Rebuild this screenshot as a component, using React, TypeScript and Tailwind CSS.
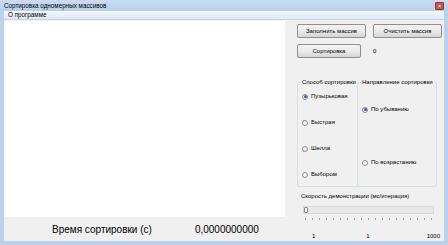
import { useState } from "react";

const font = { fontFamily: '"Liberation Sans", Arial, sans-serif' };

const Btn = ({ label, w }: { label: string; w: string }) => (
  <div
    className={`${w} h-[14px] flex items-center justify-center whitespace-nowrap text-[6px] text-black border border-[#8e8f8f] rounded-[2px] bg-gradient-to-b from-[#f2f2f2] via-[#ebebeb] to-[#d5d5d5]`}
  >
    {label}
  </div>
);

const Radio = ({ label, checked }: { label: string; checked?: boolean }) => (
  <div className="h-[7px] flex items-center gap-[3px] whitespace-nowrap text-[6px] text-black">
    <span className="w-[6px] h-[6px] rounded-full border border-[#8d8d8d] bg-[#f4f4f4] flex items-center justify-center">
      {checked && <span className="w-[3px] h-[3px] rounded-full bg-[#2a62b5]" />}
    </span>
    {label}
  </div>
);

export default function App() {
  const [method] = useState("bubble");
  return (
    <div style={font} className="w-[448px] h-[245px] bg-[#bcd2ec] flex flex-col overflow-hidden">
      {/* title bar */}
      <div className="h-[12px] flex items-center justify-between pl-[4px] pr-[4px] bg-gradient-to-b from-[#c9dcf2] to-[#b9cfea]">
        <span className="text-[6.3px] text-black whitespace-nowrap">Сортировка одномерных массивов</span>
        <span className="w-[9px] h-[8px] rounded-[1px] bg-[#c9544a] border border-[#8b3a33] flex items-center justify-center text-white text-[6px] leading-none">
          ×
        </span>
      </div>
      <div className="flex-1 flex flex-col px-[4px] pb-[4px]">
        {/* menu */}
        <div className="h-[9px] flex items-center pl-[4px] bg-gradient-to-b from-[#f4f8fd] to-[#dfe9f6] border-b border-[#c6d4e6]">
          <span className="text-[6.3px] text-black whitespace-nowrap">О программе</span>
        </div>
        {/* client */}
        <div className="flex-1 bg-[#f0f0f0] flex">
          <div className="w-[281px] flex flex-col">
            <div className="h-[196px] bg-white ml-[1px] mt-[1px]" />
            <div className="flex-1 flex items-center pl-[48px] text-[10px] text-black whitespace-nowrap">
              <span>Время сортировки (с)</span>
              <span className="ml-[43px]">0,0000000000</span>
            </div>
          </div>
          <div className="flex-1 flex flex-col pl-[12px] pr-[2px] pt-[4px]">
            <div className="flex gap-[7px]">
              <Btn label="Заполнить массив" w="w-[69px]" />
              <Btn label="Очистить массив" w="w-[69px]" />
            </div>
            <div className="flex items-center mt-[6px]">
              <Btn label="Сортировка" w="w-[64px]" />
              <span className="ml-[12px] text-[6px]">0</span>
            </div>
            {/* group boxes */}
            <div className="flex mt-[24px] h-[105px] mr-[5px]">
              <div className="relative w-[61px] border border-[#d5dfe5] rounded-[2px] flex flex-col pl-[4px] pt-[10px] gap-[19px]">
                <span className="absolute -top-[5px] left-[3px] bg-[#f0f0f0] px-[1px] text-[6px] whitespace-nowrap">Способ сортировки</span>
                <Radio label="Пузырьковая" checked={method === "bubble"} />
                <Radio label="Быстрая" />
                <Radio label="Шелла" />
                <Radio label="Выбором" />
              </div>
              <div className="relative flex-1 border border-[#d5dfe5] rounded-[2px] ml-[-1px] flex flex-col pl-[4px] pt-[23px] gap-[46px]">
                <span className="absolute -top-[5px] left-[3px] bg-[#f0f0f0] px-[1px] text-[6px] whitespace-nowrap">Направление сортировки</span>
                <Radio label="По убыванию" checked />
                <Radio label="По возрастанию" />
              </div>
            </div>
            {/* speed */}
            <div className="mt-[5px] pl-[4px] text-[6px] whitespace-nowrap">Скорость демонстрации (мс/итерация)</div>
            <div className="relative ml-[6px] mr-[8px] mt-[5px] h-[8px] bg-[#e8e8e8] border border-[#dadada]">
              <span className="absolute top-[0px] left-[0px] w-[4px] h-[6px] bg-[#f4f4f4] border border-[#8a8a8a] rounded-[1px]" />
            </div>
            <div className="flex justify-between ml-[8px] mr-[10px] mt-[4px]">
              {Array.from({ length: 19 }).map((_, i) => (
                <span key={i} className="w-[1px] h-[2px] bg-[#a0a0a0]" />
              ))}
            </div>
            <div className="flex mt-[12px] text-[6px]">
              <span className="ml-[15px]">1</span>
              <span className="ml-[51px]">1</span>
              <span className="ml-auto mr-[2px]">1000</span>
            </div>
          </div>
        </div>
      </div>
    </div>
  );
}
